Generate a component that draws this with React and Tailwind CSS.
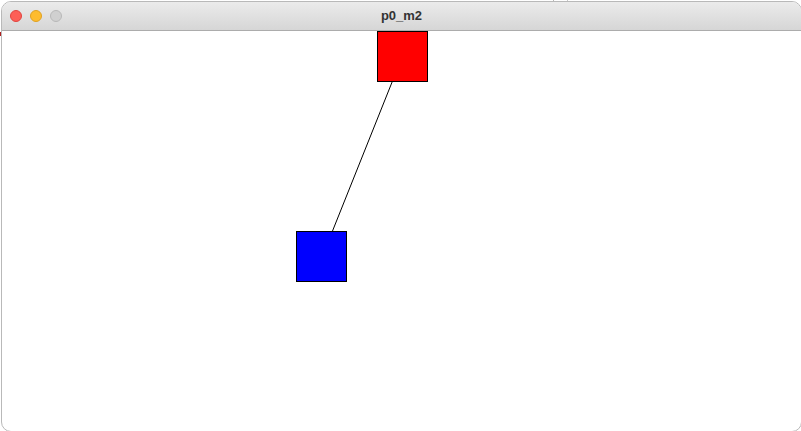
import React from "react";

export default function App() {
  return (
    <div className="relative w-[801px] h-[431px] bg-white overflow-hidden" style={{ fontFamily: "'Helvetica Neue', 'Liberation Sans', Arial, sans-serif" }}>
      {/* background window edges */}
      <div className="absolute left-[553px] top-0 w-[1px] h-[3px] bg-[#b8b8b8]" />
      <div className="absolute left-[567px] top-0 w-[1px] h-[3px] bg-[#c8c8c8]" />
      <div className="absolute left-0 top-[32px] w-[2px] h-[4px] bg-[#b02020]" />
      {/* window */}
      <div className="absolute left-[1px] top-[1px] w-[801px] h-[431px] flex flex-col rounded-[10px] border border-[#b9b9b9] overflow-hidden bg-white">
        <div className="relative h-[29px] shrink-0 bg-gradient-to-b from-[#ebebeb] to-[#d6d6d6] border-b border-[#acacac] flex items-center">
          <div className="flex items-center gap-[8px] pl-[8px]">
            <div className="w-[12px] h-[12px] rounded-full bg-[#fd5f57] border border-[#e0443e]" />
            <div className="w-[12px] h-[12px] rounded-full bg-[#febc2e] border border-[#dea123]" />
            <div className="w-[12px] h-[12px] rounded-full bg-[#d0d0d0] border border-[#b8b8b8]" />
          </div>
          <div className="absolute left-0 w-[799px] text-center text-[13px] font-bold text-[#333333]">p0_m2</div>
        </div>
        <div className="flex-1 relative">
          <svg width="800" height="410" className="absolute left-0 top-0">
            <line x1="390.5" y1="50" x2="330.5" y2="200" stroke="#000" strokeWidth="1" />
            <rect x="375.5" y="0.5" width="50" height="50" fill="#ff0000" stroke="#000" strokeWidth="1" />
            <rect x="294.5" y="200.5" width="50" height="50" fill="#0000ff" stroke="#000" strokeWidth="1" />
          </svg>
        </div>
      </div>
    </div>
  );
}
